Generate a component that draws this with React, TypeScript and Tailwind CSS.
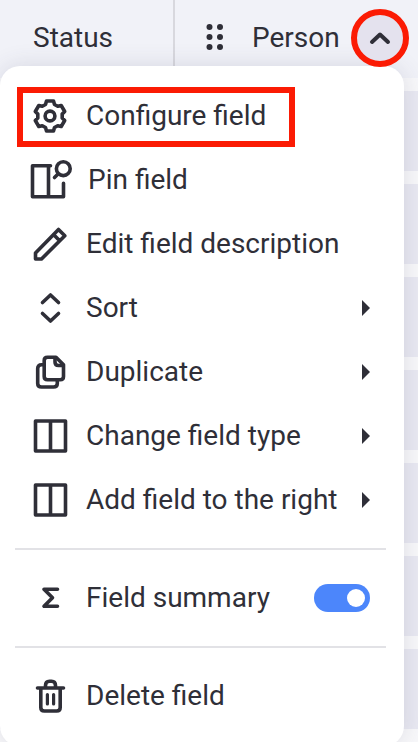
import React from "react";

type iconProps = {
  children: React.ReactNode;
  viewBox?: string;
  className?: string;
};

const Icon: React.FC<iconProps> = (props) => {
  const {
    children,
    viewBox = "0 0 36 36",
    className = "w-9 h-9",
  } = props;

  return (
    <svg
      className={className}
      viewBox={viewBox}
      fill="none"
      stroke="currentColor"
      strokeWidth={3.6}
      strokeLinecap="round"
      strokeLinejoin="round"
      aria-hidden="true"
    >
      {children}
    </svg>
  );
};

const GearIcon = () => (
  <Icon viewBox="-18 -18 36 36">
    <path d="M-3.5-15H3.5L4.5-11.5L7.7-9.7L11.2-10.5L14.7-4.5L12.2-1.9V1.9L14.7 4.5L11.2 10.5L7.7 9.7L4.5 11.5L3.5 15H-3.5L-4.5 11.5L-7.7 9.7L-11.2 10.5L-14.7 4.5L-12.2 1.9V-1.9L-14.7-4.5L-11.2-10.5L-7.7-9.7L-4.5-11.5Z" />
    <circle r="4.9" />
  </Icon>
);

const PinIcon = () => (
  <Icon viewBox="0 0 46 40" className="w-[46px] h-10">
    <path d="M22.5 5.7H4.5V36.7H35.5V23.2M20.5 5.7V36.7" />
    <circle cx="35.3" cy="8.7" r="6.9" />
    <path d="M30 14L26.5 17.5" />
  </Icon>
);

const PencilIcon = () => (
  <Icon>
    <path d="M3.5 33V27L26.5 3.5L32.8 9.8L9.5 33ZM21.5 8.5L27.7 14.7" />
  </Icon>
);

const SortIcon = () => (
  <Icon>
    <path d="M10.5 12.5L18.5 5L26.5 12.5M10.5 23.5L18.5 31L26.5 23.5" />
  </Icon>
);

const DuplicateIcon = () => (
  <Icon>
    <path d="M15.5 3.2H24L31.5 10.7V22.5Q31.5 25.7 28.3 25.7H15.5Q12.2 25.7 12.2 22.5V6.5Q12.2 3.2 15.5 3.2Z" />
    <path d="M23 4V8Q23 11.5 26.5 11.5H31" />
    <path d="M11.5 10.7H9.5Q5.7 10.7 5.7 14.5V29.5Q5.7 33 9.5 33H21.5Q25.3 33 25.3 29.5V27" />
  </Icon>
);

const ColumnsIcon = () => (
  <Icon>
    <path d="M3.5 3H33.5V33H3.5ZM18.5 3V33" />
  </Icon>
);

const SigmaIcon = () => (
  <Icon>
    <path d="M25.5 9.3H12L20.5 17.8L12 26.3H25.5" />
  </Icon>
);

const TrashIcon = () => (
  <Icon>
    <path d="M5.5 10H31.5M8.8 10V29.5Q8.8 33 12.3 33H24.7Q28.2 33 28.2 29.5V10M13.5 9.5V7.5Q13.5 3.3 17.5 3.3H19.5Q23.5 3.3 23.5 7.5V9.5" />
    <path d="M15.4 16.5V26M21.6 16.5V26" strokeWidth={3.2} />
  </Icon>
);

type menuItemProps = {
  icon: React.ReactNode;
  label: string;
  hasSubmenu?: boolean;
  highlighted?: boolean;
};

const MenuItem: React.FC<menuItemProps> = (props) => {
  const { icon, label, hasSubmenu = false, highlighted = false } = props;

  return (
    <li className="relative">
      <button
        type="button"
        className="flex items-center gap-3.5 w-full h-16 pl-7 pr-[34px] text-left whitespace-nowrap"
      >
        <span className="flex shrink-0 justify-center min-w-11">{icon}</span>
        <span>{label}</span>
        {hasSubmenu && (
          <svg
            className="ml-auto w-2 h-4 shrink-0"
            viewBox="0 0 8 16"
            fill="currentColor"
            aria-hidden="true"
          >
            <path d="M0 0L8 8L0 16Z" />
          </svg>
        )}
      </button>
      {highlighted && (
        <span className="absolute left-[17px] top-[3px] w-[278px] h-[60px] border-6 border-[#fb1b04] pointer-events-none" />
      )}
    </li>
  );
};

const Divider = () => (
  <li role="separator" className="ml-[15px] mr-[18px] my-4 h-0.5 bg-[#e2e2e6]" />
);

const FieldMenu = () => (
  <ul className="absolute left-0 right-3.5 top-[66px] py-[18px] bg-white rounded-[20px] shadow-[0_0_24px_rgba(60,60,90,0.14)]">
    <MenuItem icon={<GearIcon />} label="Configure field" highlighted />
    <MenuItem icon={<PinIcon />} label="Pin field" />
    <MenuItem icon={<PencilIcon />} label="Edit field description" />
    <MenuItem icon={<SortIcon />} label="Sort" hasSubmenu />
    <MenuItem icon={<DuplicateIcon />} label="Duplicate" hasSubmenu />
    <MenuItem icon={<ColumnsIcon />} label="Change field type" hasSubmenu />
    <MenuItem icon={<ColumnsIcon />} label="Add field to the right" hasSubmenu />
    <Divider />
    <li className="flex items-center gap-3.5 h-16 pl-7 pr-[34px]">
      <span className="flex shrink-0 justify-center min-w-11">
        <SigmaIcon />
      </span>
      <label htmlFor="fieldSummary">Field summary</label>
      <input
        id="fieldSummary"
        type="checkbox"
        role="switch"
        defaultChecked
        className="appearance-none flex items-center ml-auto w-14 h-7 px-[5px] rounded-full bg-gray-300 checked:bg-[#4c86fb] checked:justify-end before:content-[''] before:w-[18px] before:h-[18px] before:rounded-full before:bg-white"
      />
    </li>
    <Divider />
    <MenuItem icon={<TrashIcon />} label="Delete field" />
  </ul>
);

const rows = [1, 2, 3, 4, 5, 6, 7];

const App = () => {
  return (
    <main className="relative h-screen min-h-[742px] overflow-hidden bg-[#f8f8fa] font-[Roboto,sans-serif] text-[28px] text-[#2f2f38]">
      <header className="flex h-[78px] bg-[#f1f2f8]">
        <div className="flex items-center w-[175px] pl-[33px] pb-0.5 border-r-2 border-[#d8d8de]">
          Status
        </div>
        <div className="flex flex-1 items-center pl-[31px] pr-[9px] pb-0.5">
          <svg
            className="w-[18px] h-7"
            viewBox="0 0 18 28"
            fill="currentColor"
            aria-hidden="true"
          >
            {[3, 13, 23].map((y) => (
              <React.Fragment key={y}>
                <circle cx="3.5" cy={y} r="3" />
                <circle cx="14" cy={y} r="3" />
              </React.Fragment>
            ))}
          </svg>
          <span className="ml-7">Person</span>
          <button
            type="button"
            aria-label="Close field menu"
            className="relative z-10 flex items-center justify-center ml-auto w-[58px] h-[58px] rounded-full border-6 border-[#fb1b04] bg-[#e4e2ee]"
          >
            <svg
              className="w-6 h-6"
              viewBox="0 0 24 24"
              fill="none"
              stroke="currentColor"
              strokeWidth={4}
              strokeLinecap="round"
              strokeLinejoin="round"
              aria-hidden="true"
            >
              <path d="M4 16L12 8.5L20 16" />
            </svg>
          </button>
        </div>
      </header>
      <div className="flex flex-col gap-[13px] pt-[13px]">
        {rows.map((row) => (
          <div key={row} className="h-20 bg-[#e9e9f2]" />
        ))}
      </div>
      <FieldMenu />
    </main>
  );
};

export default App;
